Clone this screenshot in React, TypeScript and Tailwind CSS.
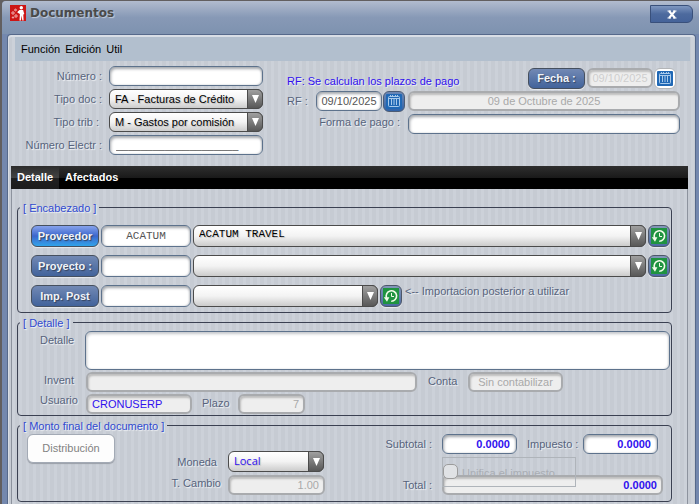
import { useState } from "react";
import type { ComponentProps, ReactNode } from "react";
import clsx from "clsx";

const labelText =
  "text-[11px] leading-4 text-[#56637c] whitespace-nowrap [text-shadow:1px_1px_1px_#f4f6f9]";

function TextField({ className, ...props }: ComponentProps<"input">) {
  return (
    <input
      {...props}
      className={clsx(
        "h-5 min-w-0 rounded-[6px] px-[6px] text-[11px] outline-none",
        props.disabled
          ? "border-2 border-[#a9abae] bg-[#eeeeee] text-[#a9a9a9] shadow-[inset_1px_2px_2px_#bdbdbd]"
          : "border border-[#5d728c] bg-white text-[#555] shadow-[inset_1px_2px_3px_#a5a8ad,inset_-1px_0_2px_#c9ccd0]",
        className
      )}
    />
  );
}

interface SelectFieldProps extends ComponentProps<"select"> {
  options: string[];
  wrapperClass?: string;
}

function SelectField({ options, wrapperClass, className, ...props }: SelectFieldProps) {
  return (
    <div className={clsx("relative min-w-0", wrapperClass)}>
      <select
        {...props}
        className={clsx(
          "block h-full w-full appearance-none rounded-[6px] border border-[#4b4b4b] bg-linear-to-b from-white via-[#f3f3f3] to-[#cccccc] pl-[5px] pr-5 text-[11px] outline-none [text-shadow:1px_1px_1px_#bbb]",
          className
        )}
      >
        {options.map((option) => (
          <option key={option}>{option}</option>
        ))}
      </select>
      <span className="pointer-events-none absolute inset-y-0 right-0 flex w-4 items-center justify-center rounded-r-[6px] border border-[#4b4b4b] bg-linear-to-b from-[#a0a0a0] to-[#585858]">
        <svg className="h-2 w-[7px]" viewBox="0 0 7 8" fill="#fff">
          <path d="M0 0h7L3.500 8z" />
        </svg>
      </span>
    </div>
  );
}

function ActionButton({ className, children }: { className?: string; children: ReactNode }) {
  return (
    <button
      type="button"
      className={clsx(
        "shrink-0 rounded-[6px] border border-[#46505f] text-[11px] font-bold text-[#f1f4f8] shadow-[0_1px_1px_#e8ebef] [text-shadow:1px_1px_1px_#33415c]",
        className
      )}
    >
      {children}
    </button>
  );
}

function CalendarButton({ label, disabled }: { label: string; disabled?: boolean }) {
  return (
    <button
      type="button"
      aria-label={label}
      disabled={disabled}
      className={clsx(
        "flex h-[21px] w-[22px] shrink-0 items-center justify-center rounded-[6px] border",
        disabled
          ? "border-[#b3b5b8] bg-white"
          : "border-[#4d5c75] bg-linear-to-b from-[#6d88b5] to-[#2f62a8]"
      )}
    >
      <svg className="h-[15px] w-4" viewBox="0 0 16 15">
        <rect width="16" height="15" rx="1" fill="#2068b5" />
        <g fill="none" stroke="#a9caeb">
          <rect x="2.500" y="2.500" width="11" height="10" rx="1" />
          <path d="M3 4.500h10M5.500 5v6M8 5v6M10.500 5v6M4.500 1v2M6.500 1v2M9.500 1v2M11.500 1v2" />
        </g>
      </svg>
    </button>
  );
}

function HistoryButton({ label }: { label: string }) {
  return (
    <button
      type="button"
      aria-label={label}
      className="flex h-[22px] w-[22px] shrink-0 items-center justify-center rounded-[6px] border border-[#4d5769] bg-linear-to-b from-[#8397b8] to-[#4b6aa3] shadow-[0_1px_1px_#e8ebef]"
    >
      <svg className="h-4 w-4" viewBox="0 0 16 16">
        <rect width="16" height="16" fill="#1f9340" />
        <g fill="none" stroke="#f2fbe9">
          <path d="M3.600 10A5.200 5.200 0 1 1 8.200 13.200" strokeWidth="1.600" />
          <path d="M8.500 5v3.500h2.500" strokeWidth="1" />
        </g>
        <path d="M.8 9.200h5.600L4 13.800z" fill="#f2fbe9" />
      </svg>
    </button>
  );
}

interface GroupProps {
  title: string;
  className?: string;
  bodyClass?: string;
  children: ReactNode;
}

function Group({ title, className, bodyClass, children }: GroupProps) {
  return (
    <fieldset className={clsx("min-w-0 rounded-[4px] border border-[#3b4152]", className)}>
      <legend className="ml-[2px] px-[3px] pt-[3px] text-[11px] leading-[13px] text-[#2f49cf] [text-shadow:1px_1px_1px_#f4f6f9]">
        [ {title} ]
      </legend>
      <div className={bodyClass}>{children}</div>
    </fieldset>
  );
}

function Logo() {
  return (
    <svg className="h-4 w-4" viewBox="0 0 16 16">
      <rect width="16" height="16" fill="#cc1515" />
      <g fill="#fff">
        <circle cx="11.300" cy="2.800" r="1.700" />
        <path d="M9.500 5h3.600l1.200 4-1 .4.300 6.100h-1.300l-.6-5-.8 5H9.500l.4-6.500-2.600-1.600.5-1z" />
      </g>
      <g fill="none" stroke="#fbdada" strokeWidth=".8">
        <circle cx="3" cy="8" r="1.200" />
        <circle cx="5.500" cy="5" r=".9" />
        <circle cx="6" cy="11" r="1.200" />
        <circle cx="3" cy="12.500" r=".7" />
      </g>
    </svg>
  );
}

function HeaderForm() {
  return (
    <div className="flex pb-[11px] pl-[3px] pr-[15px]">
      <div className="grid grid-cols-[91px_154px] items-center gap-x-[7px] gap-y-[3px] pt-[5px]">
        <label htmlFor="numero" className={clsx(labelText, "text-right")}>Número :</label>
        <TextField id="numero" />
        <label htmlFor="tipo-doc" className={clsx(labelText, "text-right")}>Tipo doc :</label>
        <SelectField id="tipo-doc" wrapperClass="h-5" options={["FA - Facturas de Crédito"]} />
        <label htmlFor="tipo-trib" className={clsx(labelText, "pr-[3px] text-right")}>Tipo trib :</label>
        <SelectField id="tipo-trib" wrapperClass="h-5" options={["M - Gastos por comisión"]} />
        <label htmlFor="electr" className={clsx(labelText, "text-right")}>Número Electr :</label>
        <TextField id="electr" defaultValue="____________________" />
      </div>

      <div className="flex min-w-0 flex-1 flex-col gap-[2px] pl-6 pt-[7px]">
        <div className="flex h-[21px] pr-1">
          <p className="min-w-0 flex-1 self-end whitespace-nowrap text-[11px] leading-4 text-[#3010ee] [text-shadow:1px_1px_1px_#f4f6f9]">
            RF: Se calculan los plazos de pago
          </p>
          <ActionButton className="mr-[2px] h-[21px] w-[57px] bg-linear-to-b from-[#7289b4] to-[#42639b]">
            Fecha :
          </ActionButton>
          <TextField
            aria-label="Fecha"
            className="mr-px w-[66px] !px-0 text-center !text-[#cfcfcf]"
            defaultValue="09/10/2025"
            disabled
          />
          <CalendarButton label="Elegir fecha" disabled />
        </div>
        <div className="flex h-[21px]">
          <label htmlFor="rf" className={clsx(labelText, "w-[29px] pt-[2px]")}>RF :</label>
          <TextField id="rf" className="mr-px w-[66px] !px-0 text-center" defaultValue="09/10/2025" />
          <CalendarButton label="Elegir fecha RF" />
          <TextField
            aria-label="Fecha completa"
            className="ml-[3px] flex-1 text-center"
            defaultValue="09 de Octubre de 2025"
            disabled
          />
        </div>
        <div className="flex h-[21px]">
          <label htmlFor="forma" className={clsx(labelText, "mr-2 w-[113px] text-right")}>Forma de pago :</label>
          <TextField id="forma" className="flex-1" />
        </div>
      </div>
    </div>
  );
}

function Encabezado() {
  const side = "h-[22px] w-[68px] bg-linear-to-b from-[#7289b4] to-[#42639b]";
  const mono = "font-['Liberation_Mono',monospace]";
  return (
    <Group title="Encabezado" bodyClass="flex flex-col gap-2 pb-[5px] pl-[13px] pr-px pt-[10px]">
      <div className="flex gap-[2px]">
        <ActionButton className="h-[22px] w-[68px] bg-linear-to-b from-[#86a2ec] via-[#3c66cc] to-[#2fa3ea]">
          Proveedor
        </ActionButton>
        <TextField
          aria-label="Código de proveedor"
          className={clsx("!h-[22px] w-[90px] text-center", mono)}
          defaultValue="ACATUM"
        />
        <SelectField
          aria-label="Proveedor"
          wrapperClass="h-[22px] flex-1"
          className={clsx("pb-1", mono)}
          options={["ACATUM TRAVEL"]}
        />
        <HistoryButton label="Historial de proveedor" />
      </div>
      <div className="flex gap-[2px]">
        <ActionButton className={side}>Proyecto :</ActionButton>
        <TextField aria-label="Código de proyecto" className="!h-[22px] w-[90px]" />
        <SelectField aria-label="Proyecto" wrapperClass="h-[22px] flex-1" options={[""]} />
        <HistoryButton label="Historial de proyecto" />
      </div>
      <div className="flex gap-[2px]">
        <ActionButton className={side}>Imp. Post</ActionButton>
        <TextField aria-label="Código de importación" className="!h-[22px] w-[90px]" />
        <SelectField aria-label="Importación" wrapperClass="h-[22px] w-[185px]" options={[""]} />
        <HistoryButton label="Historial de importación" />
        <span className={clsx(labelText, "-mt-[2px] pl-px")}>&lt;-- Importacion posterior a utilizar</span>
      </div>
    </Group>
  );
}

function Detalle() {
  return (
    <Group title="Detalle" className="mt-px" bodyClass="flex flex-col gap-[2px] pb-px pr-px pt-px">
      <div className="flex">
        <label htmlFor="detalle" className={clsx(labelText, "w-[67px] pl-[22px] pt-px")}>Detalle</label>
        <textarea
          id="detalle"
          className="h-[39px] flex-1 resize-none rounded-[6px] border border-[#5d728c] bg-white px-[6px] py-1 text-[11px] shadow-[inset_1px_2px_3px_#c5c8cd,inset_-1px_0_2px_#d5d7da] outline-none"
        />
      </div>
      <div className="flex">
        <label htmlFor="invent" className={clsx(labelText, "w-[68px] pl-[26px]")}>Invent</label>
        <TextField id="invent" className="flex-1" disabled />
        <label htmlFor="conta" className={clsx(labelText, "w-[51px] pl-[11px] pt-px")}>Conta</label>
        <TextField id="conta" className="mr-[107px] w-[95px] text-center" defaultValue="Sin contabilizar" disabled />
      </div>
      <div className="flex">
        <label htmlFor="usuario" className={clsx(labelText, "-mt-[2px] w-[68px] pl-[22px]")}>Usuario</label>
        <TextField id="usuario" className="w-[106px] !px-[4px] !text-[#3010ee]" defaultValue="CRONUSERP" disabled />
        <label htmlFor="plazo" className={clsx(labelText, "w-[46px] pl-[10px] pt-px")}>Plazo</label>
        <TextField id="plazo" className="w-[67px] !px-[4px] text-right" defaultValue="7" disabled />
      </div>
    </Group>
  );
}

function Monto() {
  const amount = "text-right font-bold !text-[#3010ee]";
  return (
    <Group
      title="Monto final del documento"
      className="mt-px"
      bodyClass="flex items-start pb-[6px] pl-[9px] pr-2 pt-px"
    >
      <button
        type="button"
        className="h-[29px] w-[88px] shrink-0 rounded-[6px] border border-[#a3aab5] bg-[#fdfdfd] text-[11px] text-[#828282] shadow-[0_1px_1px_#9a9fa8]"
      >
        Distribución
      </button>

      <div className="ml-[52px] grid grid-cols-[54px_97px] gap-x-[7px] gap-y-[3px] pt-[17px]">
        <label htmlFor="moneda" className={clsx(labelText, "pr-1 pt-[3px] text-right")}>Moneda</label>
        <SelectField
          id="moneda"
          wrapperClass="mr-px h-[21px]"
          className="font-['Open_Sans',sans-serif] !text-[#3010ee]"
          options={["Local"]}
        />
        <label htmlFor="cambio" className={clsx(labelText, "text-right")}>T. Cambio</label>
        <TextField id="cambio" className="!px-[4px] text-right" defaultValue="1.00" disabled />
      </div>

      <div className="relative ml-[52px] flex min-w-0 flex-1 flex-col gap-[21px]">
        <div className="flex items-center pr-[5px]">
          <label htmlFor="subtotal" className={clsx(labelText, "w-[65px] pr-[10px] text-right")}>Subtotal :</label>
          <TextField id="subtotal" className={clsx("flex-1", amount)} defaultValue="0.0000" />
          <label htmlFor="impuesto" className={clsx(labelText, "w-[66px] pl-[10px]")}>Impuesto :</label>
          <TextField id="impuesto" className={clsx("flex-1", amount)} defaultValue="0.0000" />
        </div>
        {/* the disabled option sits across the top edge of the total field */}
        <label
          htmlFor="unifica"
          className="absolute left-[85px] top-[31px] whitespace-nowrap text-[11px] leading-4 text-[#a9adb3]"
        >
          Unifica el impuesto
        </label>
        <div className="relative flex items-center">
          <label htmlFor="total" className={clsx(labelText, "w-[65px] pr-[10px] text-right")}>Total :</label>
          <TextField id="total" className={clsx("flex-1 !px-[4px]", amount)} defaultValue="0.0000" disabled />
        </div>
        <div className="pointer-events-none absolute left-[65px] top-[23px] h-[30px] w-[134px] border border-[#afb4ba]">
          <input
            id="unifica"
            type="checkbox"
            disabled
            className="mt-[6px] block h-[15px] w-[15px] appearance-none rounded-[5px] border border-[#9b9b9b] bg-[#e0e2e5]"
          />
        </div>
      </div>
    </Group>
  );
}

export default function App() {
  const [tab, setTab] = useState("Detalle");

  return (
    <div className="flex min-h-screen flex-col bg-[#625f60] pl-[2px] pt-px font-['Liberation_Sans',Arial,sans-serif]">
      <div className="flex flex-1 flex-col rounded-tl-[4px] bg-[#7488ae]">
        <header className="flex h-[33px] items-start rounded-tl-[4px] bg-linear-to-b from-[#b2bccf] via-[#8799b6] to-[#7e92af] pl-2 pr-[6px] pt-1">
          <Logo />
          <h1 className="flex-1 pl-1 font-['DejaVu_Sans',Verdana,sans-serif] text-[12px] font-bold leading-4 text-[#4a4a4a] [text-shadow:1px_1px_1px_#c4ccd9]">
            Documentos
          </h1>
          <button
            type="button"
            aria-label="Cerrar"
            className="flex h-[18px] w-[43px] items-center justify-center rounded-r-[6px] border border-[#39507b] bg-linear-to-b from-[#7f97c0] via-[#4d6a9e] to-[#45639a]"
          >
            <svg className="h-[9px] w-[10px]" viewBox="0 0 10 9" fill="none" stroke="#fff">
              <path d="M2 1l6 7M8 1L2 8" strokeWidth="2" />
              <path d="M.5 1h3.500M6 1h3.500M.5 8h3.500M6 8h3.500" strokeWidth="1" />
            </svg>
          </button>
        </header>

        <main className="ml-[5px] mr-[3px] flex flex-1 flex-col rounded-t-[4px] border border-b-0 border-[#56698b] bg-[repeating-linear-gradient(90deg,#c6cbd3_0px,#c6cbd3_4px,#ccd1d9_4px,#ccd1d9_7px)] pt-[2px] shadow-[inset_1px_2px_0_#d9dee6]">
          <nav className="ml-[7px] mr-[5px] flex h-6 items-center gap-[5px] bg-[#b2bfce] pl-[6px] text-[11px] text-black">
            <button type="button">Función</button>
            <button type="button">Edición</button>
            <button type="button">Util</button>
          </nav>

          <HeaderForm />

          <div
            role="tablist"
            className="ml-[3px] mr-[7px] flex h-[23px] bg-[linear-gradient(#2e2e2e,#1a1a1a_50%,#000_50%)]"
          >
            {["Detalle", "Afectados"].map((name) => (
              <button
                key={name}
                type="button"
                role="tab"
                aria-selected={tab === name}
                onClick={() => setTab(name)}
                className={clsx(
                  "px-[6px] text-[11px] font-bold text-white",
                  tab === name && "bg-[linear-gradient(#2c2c2c,#424242_50%,#202020_50%,#1c1c1c)]"
                )}
              >
                {name}
              </button>
            ))}
          </div>

          <div className="ml-[3px] mr-[7px] flex-1 border-x border-[#8d939e] pl-[5px] pr-[15px] pt-[10px]">
            <Encabezado />
            <Detalle />
            <Monto />
          </div>
        </main>
      </div>
    </div>
  );
}
